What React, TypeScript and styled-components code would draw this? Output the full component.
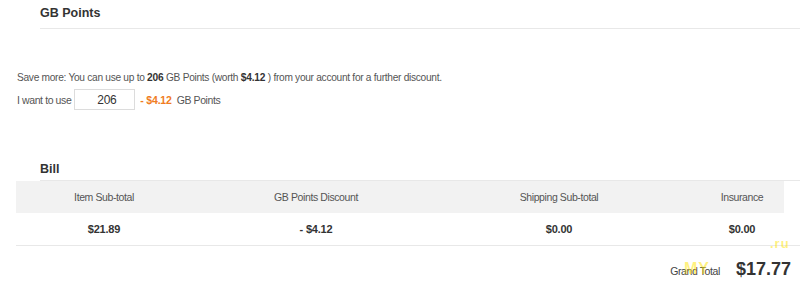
import * as React from "react";
import styled, { createGlobalStyle } from "styled-components";

const GlobalStyle = createGlobalStyle`
  body {
    margin: 0;
    background: #fff;
    font-family: "Liberation Sans", Arial, sans-serif;
    color: #555;
  }
`;

const Page = styled.div`
  position: relative;
  width: 800px;
  height: 282px;
  overflow: hidden;
`;

const SectionTitle = styled.div<{ $top: number }>`
  margin: ${(p) => p.$top}px 0 0 40px;
  padding-top: 5px;
  height: 23px;
  border-bottom: 1px solid #e8e8e8;
  font-size: 12.5px;
  font-weight: bold;
  color: #333;
  line-height: 16px;
`;

const Points = styled.div`
  padding: 42px 0 0 17px;
  font-size: 10.5px;
  letter-spacing: -0.4px;
`;

const SaveLine = styled.p`
  margin: 0;
  line-height: 14px;
  font-size: 10.2px;
  letter-spacing: -0.3px;
  b {
    color: #333;
    letter-spacing: -0.2px;
  }
`;

const UseRow = styled.div`
  display: flex;
  align-items: center;
  margin-top: 4px;
  gap: 5px;
`;

const PointsInput = styled.input`
  width: 61px;
  height: 21px;
  box-sizing: border-box;
  margin-left: -2px;
  border: 1px solid #dcdcdc;
  padding: 0 0 0 22px;
  font-family: "Liberation Sans", Arial, sans-serif;
  font-size: 12px;
  letter-spacing: -0.3px;
  color: #333;
  outline: none;
`;

const Minus = styled.span`
  color: #f07c22;
  font-weight: bold;
  letter-spacing: -0.2px;
`;

const BillTitle = styled(SectionTitle)`
  height: 19px;
`;

const Table = styled.div`
  margin-left: 16px;
`;

const Cols = styled.div<{ $head?: boolean }>`
  display: grid;
  grid-template-columns: 176px 248px 238px 128px;
  height: 32px;
  align-items: center;
  text-align: center;
  font-size: ${(p) => (p.$head ? "10.5px" : "11px")};
  letter-spacing: ${(p) => (p.$head ? "-0.4px" : "-0.2px")};
  background: ${(p) =>
    p.$head ? "linear-gradient(#f2f2f2, #f2f2f2) no-repeat 0 0 / 768px 100%" : "transparent"};
  color: ${(p) => (p.$head ? "#555" : "#333")};
  font-weight: ${(p) => (p.$head ? "normal" : "bold")};
`;

const Body = styled.div`
  border-bottom: 1px solid #e8e8e8;
`;

const Total = styled.div`
  display: flex;
  justify-content: flex-end;
  align-items: baseline;
  gap: 16px;
  padding: 13px 9px 0 0;
  font-size: 10.5px;
  letter-spacing: -0.4px;
  color: #444;
`;

const Amount = styled.span`
  font-size: 18px;
  font-weight: bold;
  letter-spacing: 0;
  color: #333;
`;

const Mark = styled.span<{ $x: number; $y: number; $size: number }>`
  position: absolute;
  left: ${(p) => p.$x}px;
  top: ${(p) => p.$y}px;
  font-size: ${(p) => p.$size}px;
  font-weight: bold;
  color: rgba(255, 228, 0, 0.5);
  letter-spacing: 1px;
  pointer-events: none;
`;

const heads = ["Item Sub-total", "GB Points Discount", "Shipping Sub-total", "Insurance"];
const values = ["$21.89", "- $4.12", "$0.00", "$0.00"];

export default function App() {
  return (
    <Page>
      <GlobalStyle />
      <SectionTitle $top={0}>GB Points</SectionTitle>
      <Points>
        <SaveLine>
          Save more: You can use up to <b>206</b> GB Points (worth <b>$4.12</b> ) from your account for a further discount.
        </SaveLine>
        <UseRow>
          I want to use
          <PointsInput defaultValue="206" />
          <span>
            <Minus>- $4.12</Minus>&nbsp; GB Points
          </span>
        </UseRow>
      </Points>
      <BillTitle $top={46}>Bill</BillTitle>
      <Table>
        <Cols $head>
          {heads.map((h) => (
            <span key={h}>{h}</span>
          ))}
        </Cols>
        <Body>
          <Cols>
            {values.map((v, i) => (
              <span key={i}>{v}</span>
            ))}
          </Cols>
        </Body>
      </Table>
      <Total>
        Grand Total
        <Amount>$17.77</Amount>
      </Total>
      <Mark $x={684} $y={260} $size={16}>MY</Mark>
      <Mark $x={770} $y={236} $size={13}>.ru</Mark>
    </Page>
  );
}
